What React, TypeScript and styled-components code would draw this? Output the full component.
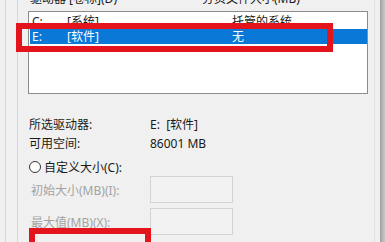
import React from "react";
import styled, { createGlobalStyle } from "styled-components";

const Global = createGlobalStyle`
  html, body { margin: 0; padding: 0; background: #f0f0f0; }
  body { font-family: "Noto Sans", "Noto Sans CJK SC", sans-serif; font-size: 12px; }
`;

const Window = styled.div`
  position: relative;
  width: 385px;
  height: 242px;
  overflow: hidden;
  background: #f0f0f0;
  display: flex;
  padding-left: 5px;
  box-sizing: border-box;
  color: #1a1a1a;
`;

const Page = styled.div`
  flex: 1;
  border-left: 1px solid #d8d8d8;
  border-right: 1px solid #e2e2e2;
  margin-right: 5px;
`;

const FrameEdge = styled.div`
  width: 5px;
  background: linear-gradient(to right, #9a9a9a 0, #b4b4b4 2px, #c8c8c8 5px);
`;

const GroupBox = styled.div`
  margin-left: 11px;
  border-left: 1px solid #d6d6d6;
  padding-left: 10px;
  height: 100%;
  display: flex;
  flex-direction: column;
`;

const Header = styled.div`
  margin-top: -9px;
  height: 16px;
  line-height: 16px;
  display: grid;
  grid-template-columns: 172px auto;
  padding-left: 2px;
`;

const ListBox = styled.div`
  margin-top: 4px;
  width: 340px;
  height: 83px;
  box-sizing: border-box;
  border: 1px solid #8c8c8c;
  background: #ffffff;
  padding-top: 2px;
`;

const Row = styled.div<{ $selected?: boolean }>`
  height: 15px;
  line-height: 15px;
  margin-left: 1px;
  padding-left: 2px;
  display: grid;
  grid-template-columns: 35px 165px auto;
  background: ${(p) => (p.$selected ? "#0a78d7" : "transparent")};
  color: ${(p) => (p.$selected ? "#ffffff" : "#1a1a1a")};
`;

const Info = styled.div`
  margin-top: 21px;
  display: flex;
  flex-direction: column;
  padding-left: 1px;
`;

const InfoRow = styled.div`
  display: grid;
  grid-template-columns: 121px auto;
  height: 19px;
  line-height: 19px;
`;

const RadioRow = styled.label`
  margin-top: 4px;
  height: 19px;
  display: flex;
  align-items: center;
  gap: 3px;
`;

const RadioDot = styled.span`
  width: 12px;
  height: 12px;
  box-sizing: border-box;
  border: 1px solid #333333;
  border-radius: 50%;
  background: #ffffff;
`;

const FieldRow = styled.div<{ $gap?: number }>`
  margin-top: ${(p) => p.$gap ?? 0}px;
  display: flex;
  align-items: center;
  height: 27px;
`;

const FieldLabel = styled.span`
  width: 119px;
  padding-left: 2px;
  color: #a3a3a3;
  line-height: 16px;
  padding-top: 2px;
`;

const Field = styled.div`
  width: 83px;
  height: 27px;
  box-sizing: border-box;
  border: 1px solid #d2d2d2;
  background: #f2f2f2;
`;

const Annotation = styled.div<{ $x: number; $y: number; $w: number; $h: number }>`
  position: absolute;
  left: ${(p) => p.$x}px;
  top: ${(p) => p.$y}px;
  width: ${(p) => p.$w}px;
  height: ${(p) => p.$h}px;
  box-sizing: border-box;
  border: 6px solid #e3141b;
  pointer-events: none;
`;

export default function App() {
  return (
    <>
      <Global />
      <Window>
        <Page>
          <GroupBox>
            <Header>
              <span>驱动器 [卷标](D)</span>
              <span>分页文件大小(MB)</span>
            </Header>
            <ListBox>
              <Row>
                <span>C:</span>
                <span>[系统]</span>
                <span>托管的系统</span>
              </Row>
              <Row $selected>
                <span>E:</span>
                <span>[软件]</span>
                <span>无</span>
              </Row>
            </ListBox>
            <Info>
              <InfoRow>
                <span>所选驱动器:</span>
                <span>E:&nbsp;&nbsp;[软件]</span>
              </InfoRow>
              <InfoRow>
                <span>可用空间:</span>
                <span>86001 MB</span>
              </InfoRow>
              <RadioRow>
                <RadioDot />
                <span>自定义大小(C):</span>
              </RadioRow>
              <FieldRow>
                <FieldLabel>初始大小(MB)(I):</FieldLabel>
                <Field />
              </FieldRow>
              <FieldRow $gap={5}>
                <FieldLabel>最大值(MB)(X):</FieldLabel>
                <Field />
              </FieldRow>
            </Info>
          </GroupBox>
        </Page>
        <FrameEdge />
        <Annotation $x={16} $y={23} $w={317} $h={29} />
        <Annotation $x={29} $y={228} $w={122} $h={30} />
      </Window>
    </>
  );
}
